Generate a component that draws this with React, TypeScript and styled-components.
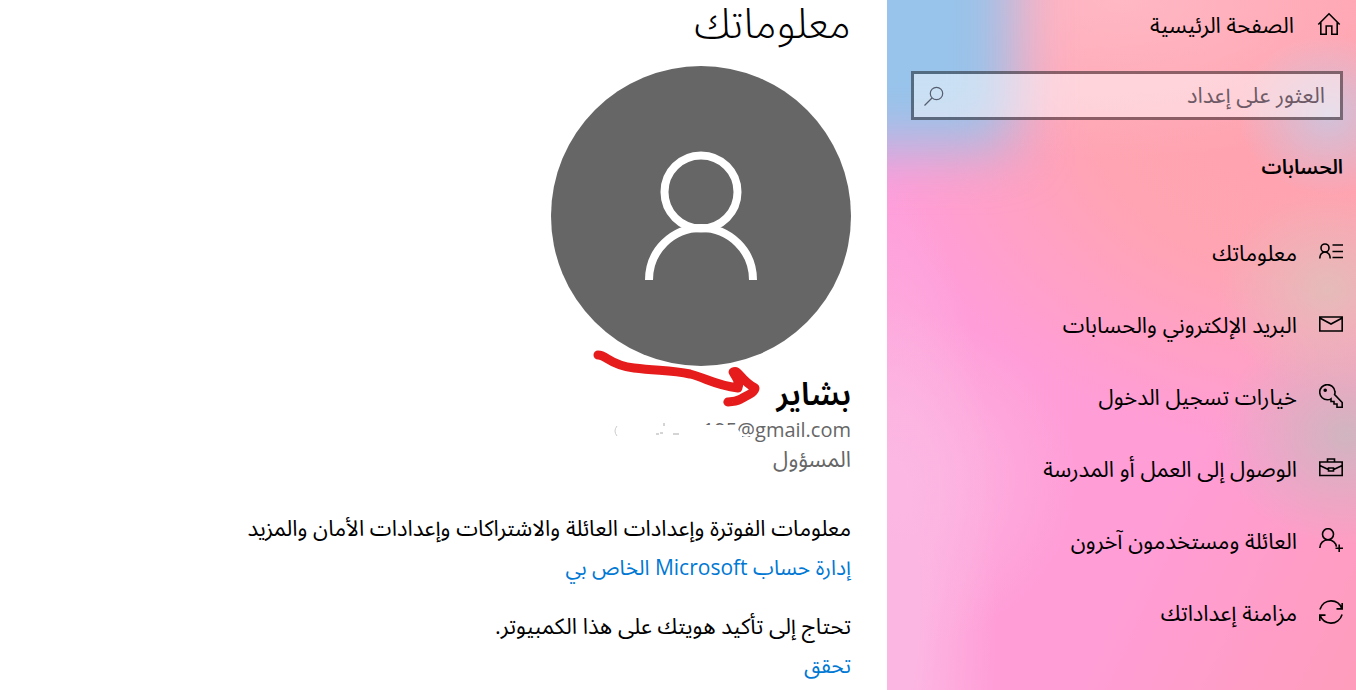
import React from "react";
import styled, { createGlobalStyle } from "styled-components";

const GlobalStyle = createGlobalStyle`
  *, *::before, *::after { box-sizing: border-box; }
  body {
    margin: 0;
    background: #fff;
    color: #000;
    font-family: "Open Sans", "Noto Sans Arabic", "DejaVu Sans", sans-serif;
  }
  h1, h2, h3, p, ul { margin: 0; padding: 0; }
`;

const Page = styled.div`
  display: flex;
  min-height: 100vh;
`;

const Sidebar = styled.aside`
  position: relative;
  z-index: 0;
  overflow: hidden;
  flex: 0 0 469px;
  padding: 0 13px 24px 24px;
  background:
    radial-gradient(ellipse 90px 80px at 94% 115px, #d0c2da 0%, rgba(208, 194, 218, 0) 100%),
    radial-gradient(ellipse 110px 100px at 94% 290px, rgba(226, 190, 186, 0.9) 0%, rgba(226, 188, 184, 0) 100%),
    radial-gradient(ellipse 130px 110px at 98% 435px, #d0b5c0 0%, rgba(208, 181, 192, 0) 100%),
    radial-gradient(ellipse 190px 170px at 0 480px, rgba(252, 184, 227, 0.9) 0%, rgba(252, 182, 226, 0.7) 40%, rgba(252, 182, 226, 0) 100%),
    radial-gradient(ellipse 110px 420px at 0 600px, #fcb6e2 0%, #fcb6e2 30%, rgba(252, 182, 226, 0) 100%),
    radial-gradient(ellipse 320px 160px at 50% 0, #ffb8c4 0%, rgba(255, 184, 196, 0) 100%),
    radial-gradient(ellipse 440px 360px at 90% 90px, #ffa2ae 0%, #ffa4b2 50%, rgba(255, 162, 190, 0) 100%),
    linear-gradient(115deg, #ff9ddb 0%, #ff9dd6 65%, #ff9dbc 100%);
  &::before {
    content: "";
    position: absolute;
    z-index: -1;
    top: -100px;
    left: -100px;
    width: 226px;
    height: 248px;
    background: #98c3ea;
    filter: blur(28px);
  }
`;

const HomeLink = styled.a`
  display: flex;
  align-items: center;
  gap: 23px;
  height: 48px;
  padding-inline-start: 2px;
  color: #000;
  font-size: 22px;
  text-decoration: none;
`;

const SearchBox = styled.label`
  display: flex;
  align-items: center;
  height: 49px;
  margin-top: 23px;
  padding: 0 15px 0 8px;
  border: 3px solid rgba(0, 0, 0, 0.45);
  background: rgba(255, 255, 255, 0.48);
  background-clip: padding-box;
`;

const SearchInput = styled.input`
  flex: 1;
  min-width: 0;
  padding: 0 0 4px;
  border: 0;
  outline: 0;
  background: transparent;
  color: #000;
  font: inherit;
  font-size: 22px;
  &::placeholder { color: #6d5a66; opacity: 1; }
`;

const SectionTitle = styled.h2`
  margin-top: 31px;
  font-size: 20px;
  line-height: 32px;
  font-weight: 600;
`;

const NavList = styled.ul`
  margin-top: 33px;
  list-style: none;
`;

const NavLink = styled.a`
  display: flex;
  align-items: center;
  gap: 22px;
  height: 72px;
  color: #000;
  font-size: 22px;
  text-decoration: none;
`;

const Label = styled.span`
  padding-top: 3px;
`;

const Icon = styled.svg`
  flex: none;
  width: 24px;
  height: 24px;
  fill: none;
  stroke: currentColor;
  stroke-width: 1.6;
`;

const SearchIcon = styled(Icon)`
  color: #555e70;
  stroke-width: 1.2;
`;

const Main = styled.main`
  flex: 1;
  min-width: 0;
  padding: 0 36px 0 24px;
`;

const PageTitle = styled.h1`
  font-size: 42px;
  line-height: 44px;
  font-weight: 300;
`;

const Avatar = styled.svg`
  display: block;
  width: 300px;
  height: 300px;
  margin-top: 22px;
`;

const Profile = styled.section`
  position: relative;
  display: flex;
  flex-direction: column;
`;

const Arrow = styled.svg`
  position: absolute;
  top: -20px;
  right: 88px;
  width: 176px;
  height: 64px;
`;

const Name = styled.h2`
  padding-top: 4px;
  font-size: 32px;
  line-height: 46px;
  font-weight: 600;
`;

const Detail = styled.p<{ $size: number }>`
  position: relative;
  color: #666;
  font-size: ${(p) => p.$size}px;
  line-height: 28px;
`;

const Smudge = styled.svg`
  position: absolute;
  top: 0;
  right: 98px;
  width: 150px;
  height: 28px;
`;

const Block = styled.section`
  margin-top: 35px;
  font-size: 22px;
  line-height: 40px;
  & + & { margin-top: 18px; }
`;

const TextLink = styled.a`
  display: block;
  width: fit-content;
  color: #0078d4;
  font-size: 21px;
  text-decoration: none;
`;

const navItems = [
  {
    label: "معلوماتك",
    icon: (
      <>
        <circle cx="6" cy="8" r="4" />
        <path d="M.8 18.500c0-3.700 2.300-6.500 5.200-6.500s5.200 2.800 5.200 6.500M13.500 5H24M13.500 11.500H24M13.500 17.500H24" />
      </>
    ),
  },
  {
    label: "البريد الإلكتروني والحسابات",
    icon: <path d="M.8 5h22.400v14H.8zM.8 6l11.200 6 11.200-6" />,
  },
  {
    label: "خيارات تسجيل الدخول",
    icon: (
      <>
        <path d="M15.600 10.500c.4-1 .5-2 .3-3A7.600 7.600 0 1 0 8.500 15.800c1.300 0 2.500-.3 3.500-1v2.700h3v2.500h3v3.200h5.200v-4.700z" />
        <circle cx="6.200" cy="6.200" r="1" fill="currentColor" />
      </>
    ),
  },
  {
    label: "الوصول إلى العمل أو المدرسة",
    icon: <path d="M.8 6h22.400v13.500H.8zM8.500 6V3h7v3M.8 9.500l8.500 4M23.200 9.500l-8.500 4M9.500 12h5v3h-5z" />,
  },
  {
    label: "العائلة ومستخدمون آخرون",
    icon: (
      <>
        <circle cx="9" cy="6.200" r="5.500" />
        <path d="M.8 20c0-4.700 3.600-8.200 8.200-8.200s8.200 3.200 8.400 7M20.200 16.500V24M16.500 20.300H24" />
      </>
    ),
  },
  {
    label: "مزامنة إعداداتك",
    icon: (
      <path d="M.9 9.500C2.500 4.300 7 .9 12 .9c5 0 9.300 3 11 8M23.200 3v5.900h-5.700M23.100 14.500C21.500 19.700 17 23.100 12 23.100c-5 0-9.300-3-11-8M.8 21v-5.900h5.700" />
    ),
  },
];

export default function App() {
  return (
    <Page dir="rtl" lang="ar">
      <GlobalStyle />
      <Sidebar>
        <HomeLink href="#home">
          <Icon viewBox="0 0 24 24" aria-hidden="true">
            <path d="M1.300 12.500 12 1.800l10.700 10.700M3.800 10.500v11.700h5.400v-8.200h5.600v8.200h5.400V10.500" />
          </Icon>
          <Label>الصفحة الرئيسية</Label>
        </HomeLink>
        <SearchBox>
          <SearchInput type="text" placeholder="العثور على إعداد" aria-label="العثور على إعداد" />
          <SearchIcon viewBox="0 0 24 24" aria-hidden="true">
            <circle cx="14.500" cy="9.500" r="6.200" />
            <path d="M10 14 2.500 21.500" />
          </SearchIcon>
        </SearchBox>
        <SectionTitle>الحسابات</SectionTitle>
        <nav>
          <NavList>
            {navItems.map((item) => (
              <li key={item.label}>
                <NavLink href="#settings">
                  <Icon viewBox="0 0 24 24" aria-hidden="true">{item.icon}</Icon>
                  <Label>{item.label}</Label>
                </NavLink>
              </li>
            ))}
          </NavList>
        </nav>
      </Sidebar>
      <Main>
        <PageTitle>معلوماتك</PageTitle>
        <Avatar viewBox="0 0 300 300" aria-hidden="true">
          <circle cx="150" cy="150" r="150" fill="#666" />
          <g fill="none" stroke="#fff" strokeWidth="8">
            <ellipse cx="150" cy="126" rx="36.500" ry="36.500" />
            <path d="M98 214c0-29 23-52 52-52s52 23 52 52" />
          </g>
        </Avatar>
        <Profile>
          <Name>بشاير</Name>
          <Detail $size={20}>
            <bdi>195@gmail.com</bdi>
            <Smudge viewBox="0 0 150 28" aria-hidden="true">
              <path d="M0 0h92v9h42q0 6 5 8v4h11v7H0z" fill="#fff" />
              <path d="M14 10q-4 5 0 10" fill="none" stroke="#ccc" />
              <path d="M61 7v3M53 18h3M57 17h3M70 18h6" fill="none" stroke="#aaa" />
            </Smudge>
          </Detail>
          <Detail $size={22}>المسؤول</Detail>
          <Arrow viewBox="0 0 176 64" aria-hidden="true">
            <path
              d="M11 9C20 9 22 19 47 22S84 24 103 28C119 32 128 39 151 42C154 36 146 27 146 26C152 23 152 33 168 42C168 47 158 50 154 53C148 56 140 56 141 56"
              fill="none"
              stroke="#e61c1c"
              strokeWidth="9"
              strokeLinecap="round"
              strokeLinejoin="round"
            />
          </Arrow>
        </Profile>
        <Block>
          <p>معلومات الفوترة وإعدادات العائلة والاشتراكات وإعدادات الأمان والمزيد</p>
          <TextLink href="#account">إدارة حساب Microsoft الخاص بي</TextLink>
        </Block>
        <Block>
          <p>تحتاج إلى تأكيد هويتك على هذا الكمبيوتر.</p>
          <TextLink href="#verify">تحقق</TextLink>
        </Block>
      </Main>
    </Page>
  );
}
